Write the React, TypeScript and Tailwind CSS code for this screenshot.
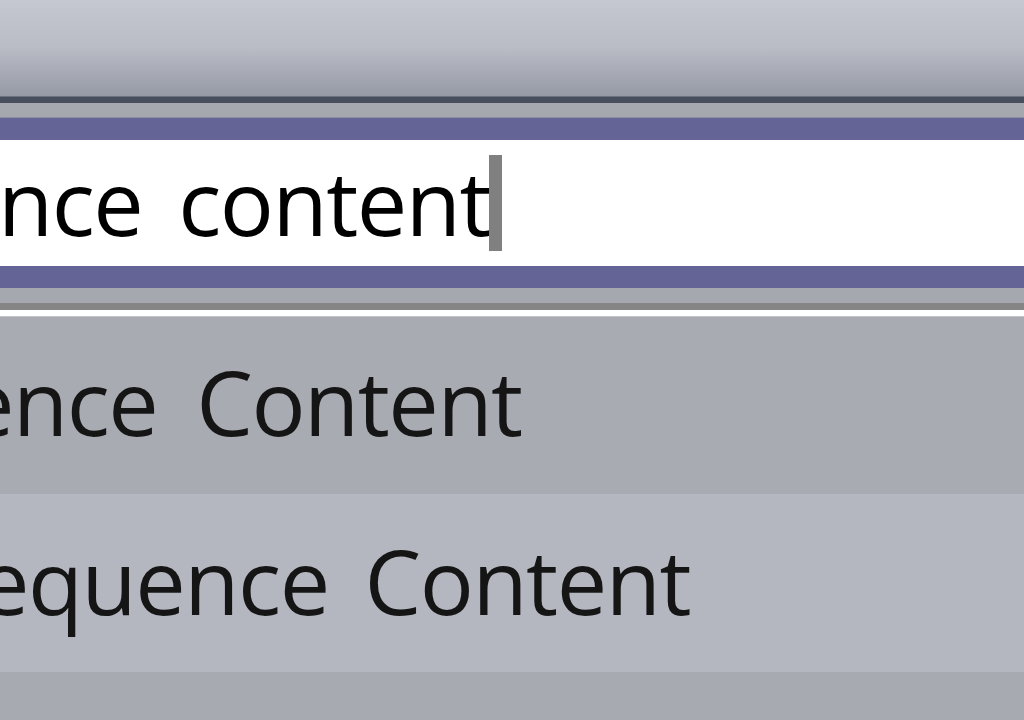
export default function App() {
	const font = { fontFamily: '"Open Sans", "Noto Sans", sans-serif' }

	return (
		<div className="h-[720px] w-[1024px] overflow-hidden flex flex-col bg-[#a8aab2]" style={font}>
			{/* title bar */}
			<div className="h-[96px] bg-gradient-to-b from-[#c5c8d0] via-[#b9bcc5] to-[#969aa5]" />
			<div className="h-[7px] bg-[#474f5f] border-t border-[#6b7180]" />
			<div className="h-[15px] bg-[#a6a8af] border-b border-[#8d8ea6]" />

			{/* search field */}
			<div className="h-[22px] bg-[#646496]" />
			<div className="h-[126px] bg-white overflow-hidden pt-[16px] flex">
				<span className="text-[90px] leading-[90px] tracking-[-1.5px] [word-spacing:14px] text-black whitespace-nowrap ml-[-2px]">
					nce content
				</span>
				<span className="w-[13px] h-[96px] bg-[#808080] ml-[-1px] -mt-[1px] shrink-0" />
			</div>
			<div className="h-[22px] bg-[#646496]" />
			<div className="h-[15px] bg-[#a6a8af]" />
			<div className="h-[7px] bg-[#858585]" />
			<div className="h-[7px] bg-white border-b border-[#c2c3c8]" />

			{/* results */}
			<div className="h-[177px] bg-[#a9abb3] overflow-hidden pt-[39px] flex">
				<span className="text-[90px] leading-[90px] tracking-[-1.5px] [word-spacing:17px] text-[#151515] whitespace-nowrap ml-[-36px]">
					ence Content
				</span>
			</div>
			<div className="h-[178px] bg-[#b5b7c0] overflow-hidden pt-[41px] flex">
				<span className="text-[90px] leading-[90px] tracking-[-1.5px] [word-spacing:14px] text-[#151515] whitespace-nowrap ml-[-21px]">
					equence Content
				</span>
			</div>
			<div className="flex-1 bg-[#a8aab2]" />
		</div>
	)
}
